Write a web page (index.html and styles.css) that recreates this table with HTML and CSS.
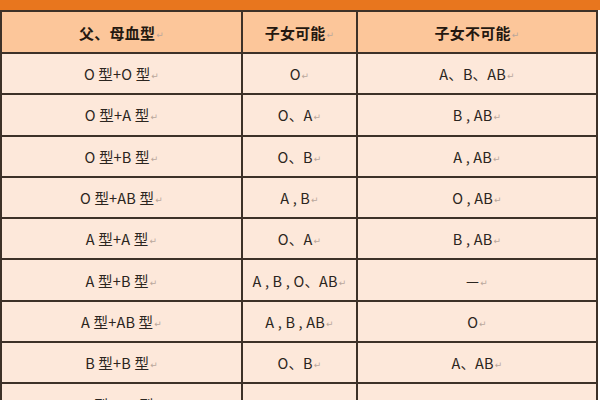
FILE: index.html
```html
<!DOCTYPE html>
<html>
<head>
<meta charset="utf-8">
<link rel="stylesheet" href="styles.css">
</head>
<body>
<div class="page">
  <div class="title-bar"></div>
  <div class="grid">
    <div class="cell head">父、母血型<span class="ret">↵</span></div>
    <div class="cell head">子女可能<span class="ret">↵</span></div>
    <div class="cell head">子女不可能<span class="ret">↵</span></div>

    <div class="cell">O 型+O 型<span class="ret">↵</span></div>
    <div class="cell">O<span class="ret">↵</span></div>
    <div class="cell">A、B、AB<span class="ret">↵</span></div>

    <div class="cell">O 型+A 型<span class="ret">↵</span></div>
    <div class="cell">O、A<span class="ret">↵</span></div>
    <div class="cell">B , AB<span class="ret">↵</span></div>

    <div class="cell">O 型+B 型<span class="ret">↵</span></div>
    <div class="cell">O、B<span class="ret">↵</span></div>
    <div class="cell">A , AB<span class="ret">↵</span></div>

    <div class="cell">O 型+AB 型<span class="ret">↵</span></div>
    <div class="cell">A , B<span class="ret">↵</span></div>
    <div class="cell">O , AB<span class="ret">↵</span></div>

    <div class="cell">A 型+A 型<span class="ret">↵</span></div>
    <div class="cell">O、A<span class="ret">↵</span></div>
    <div class="cell">B , AB<span class="ret">↵</span></div>

    <div class="cell">A 型+B 型<span class="ret">↵</span></div>
    <div class="cell">A , B , O、AB<span class="ret">↵</span></div>
    <div class="cell">—<span class="ret">↵</span></div>

    <div class="cell">A 型+AB 型<span class="ret">↵</span></div>
    <div class="cell">A , B , AB<span class="ret">↵</span></div>
    <div class="cell">O<span class="ret">↵</span></div>

    <div class="cell">B 型+B 型<span class="ret">↵</span></div>
    <div class="cell">O、B<span class="ret">↵</span></div>
    <div class="cell">A、AB<span class="ret">↵</span></div>

    <div class="cell">B 型+AB 型<span class="ret">↵</span></div>
    <div class="cell">A , B , AB<span class="ret">↵</span></div>
    <div class="cell">O<span class="ret">↵</span></div>
  </div>
</div>
</body>
</html>
```
FILE: styles.css
```css
html, body {
  margin: 0;
  padding: 0;
  background: #ffffff;
  overflow: hidden;
}
.page {
  width: 600px;
  height: 400px;
  overflow: hidden;
  font-family: "Noto Sans CJK SC", "DejaVu Sans", sans-serif;
}
.title-bar {
  height: 10px;
  background: #e8761e;
}
.grid {
  width: 594px;
  display: grid;
  grid-template-columns: 239px 113px 238px;
  grid-template-rows: 40px repeat(9, 39.3px);
  gap: 2px;
  padding: 2px;
  background: #3d3128;
}
.cell {
  background: #fde8da;
  display: flex;
  align-items: center;
  justify-content: center;
  font-size: 14.5px;
  color: #2b2520;
  letter-spacing: 0.2px;
  white-space: pre;
}
.cell.head {
  background: #fcc69a;
  font-weight: bold;
  font-size: 15px;
  color: #241810;
}
.ret {
  font-size: 9px;
  color: #b9a79c;
  font-weight: normal;
  margin-left: 1px;
  margin-top: 4px;
}
```
